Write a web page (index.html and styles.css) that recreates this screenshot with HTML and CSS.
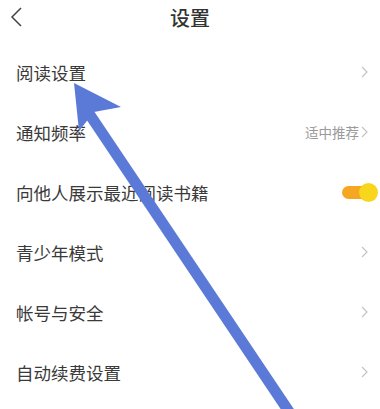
FILE: index.html
```html
<!DOCTYPE html>
<html lang="zh-CN">
<head>
  <meta charset="UTF-8">
  <meta name="viewport" content="width=device-width, initial-scale=1.0">
  <title>设置</title>
  <link rel="stylesheet" href="styles.css">
</head>
<body>
  <div id="halaman">
    <div class="header">
      <svg class="btn-back" width="14" height="22" viewBox="0 0 14 22">
        <polyline points="11,2 2,11 11,20" fill="none" stroke="#444" stroke-width="1.5"/>
      </svg>
      <div class="judul">设置</div>
    </div>

    <div class="daftar">
      <div class="baris">
        <span class="label">阅读设置</span>
        <span class="kanan"><svg class="panah" width="7" height="12" viewBox="0 0 7 12"><polyline points="1,1 6,6 1,11" fill="none" stroke="#c4c4c4" stroke-width="1.2"/></svg></span>
      </div>
      <div class="baris">
        <span class="label">通知频率</span>
        <span class="kanan"><span class="nilai">适中推荐</span><svg class="panah" width="7" height="12" viewBox="0 0 7 12"><polyline points="1,1 6,6 1,11" fill="none" stroke="#c4c4c4" stroke-width="1.2"/></svg></span>
      </div>
      <div class="baris">
        <span class="label">向他人展示最近阅读书籍</span>
        <span class="saklar"><span class="jempol"></span></span>
      </div>
      <div class="baris">
        <span class="label">青少年模式</span>
        <span class="kanan"><svg class="panah" width="7" height="12" viewBox="0 0 7 12"><polyline points="1,1 6,6 1,11" fill="none" stroke="#c4c4c4" stroke-width="1.2"/></svg></span>
      </div>
      <div class="baris">
        <span class="label">帐号与安全</span>
        <span class="kanan"><svg class="panah" width="7" height="12" viewBox="0 0 7 12"><polyline points="1,1 6,6 1,11" fill="none" stroke="#c4c4c4" stroke-width="1.2"/></svg></span>
      </div>
      <div class="baris">
        <span class="label">自动续费设置</span>
        <span class="kanan"><svg class="panah" width="7" height="12" viewBox="0 0 7 12"><polyline points="1,1 6,6 1,11" fill="none" stroke="#c4c4c4" stroke-width="1.2"/></svg></span>
      </div>
    </div>

    <!-- panah biru penunjuk -->
    <svg class="penunjuk" width="380" height="409" viewBox="0 0 380 409">
      <line x1="88" y1="112" x2="300" y2="428" stroke="#5b7ad8" stroke-width="11"/>
      <polygon points="74,83 121,107 94,112 79,131" fill="#5b7ad8"/>
    </svg>
  </div>
</body>
</html>
```

FILE: styles.css
```css
body {
  margin: 0;
  background: #fff;
  font-family: "Noto Sans CJK SC", "Noto Sans", sans-serif;
  color: #333;
}

#halaman {
  position: relative;
  width: 380px;
  height: 409px;
  overflow: hidden;
}

.header {
  height: 34px;
  display: flex;
  align-items: center;
  justify-content: center;
  position: relative;
}

.btn-back {
  position: absolute;
  left: 10px;
  top: 6px;
}

.judul {
  font-size: 20px;
  font-weight: 500;
  color: #333;
}

.daftar {
  margin-top: 8px;
}

.baris {
  height: 60px;
  display: flex;
  align-items: center;
  justify-content: space-between;
  padding: 0 12px 0 16px;
}

.label {
  font-size: 17.5px;
  color: #3a3a3a;
}

.kanan {
  display: flex;
  align-items: center;
  gap: 2px;
}

.nilai {
  font-size: 13.5px;
  color: #9a9a9a;
}

.saklar {
  position: relative;
  width: 30px;
  height: 13px;
  border-radius: 7px;
  background: #f5a623;
  margin-right: -4px;
}

.jempol {
  position: absolute;
  right: -6px;
  top: -3px;
  width: 19px;
  height: 19px;
  border-radius: 50%;
  background: #f8d61c;
}

.penunjuk {
  position: absolute;
  left: 0;
  top: 0;
  pointer-events: none;
}
```
